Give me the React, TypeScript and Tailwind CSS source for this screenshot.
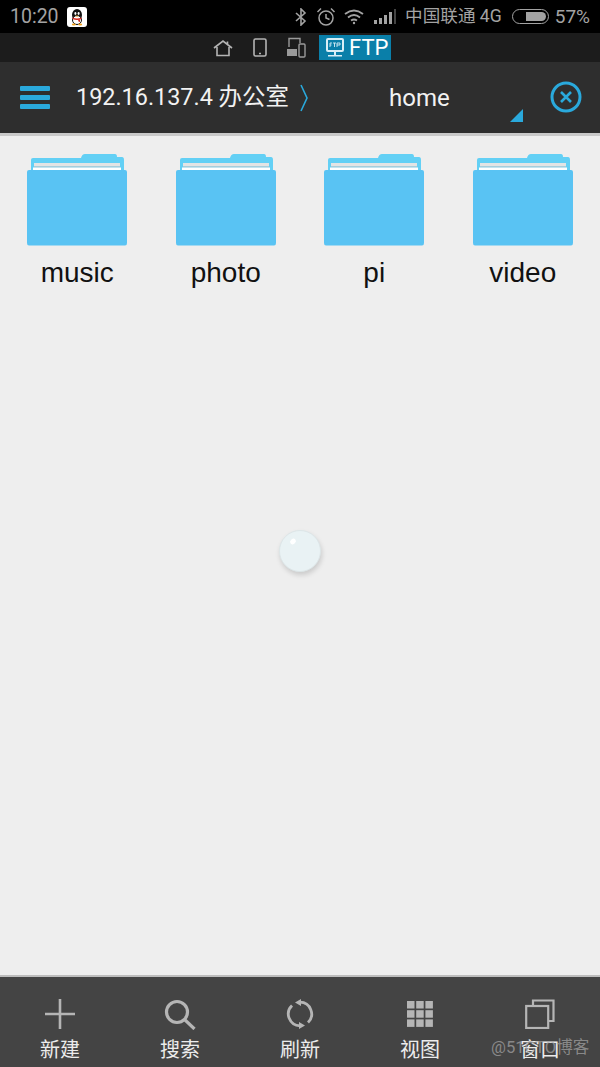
const cjk = { fontFamily: '"Roboto", "Noto Sans CJK SC", sans-serif' }

function QQIcon() {
  return (
    <svg width="20" height="20" viewBox="0 0 20 20" className="shrink-0">
      <rect width="20" height="20" rx="3" fill="#fff" />
      <ellipse cx="10" cy="8" rx="5" ry="6" fill="#111" />
      <ellipse cx="10" cy="13" rx="4.5" ry="4.5" fill="#fff" stroke="#111" strokeWidth="1" />
      <path d="M5.5 10.5 Q10 12.5 14.5 10.5 L14.5 12 Q10 14 5.5 12 Z" fill="#d9281e" />
      <path d="M11 12.5 L13 12.5 L13 15 L11.5 14.5 Z" fill="#d9281e" />
      <ellipse cx="8.4" cy="6.5" rx="1" ry="1.4" fill="#fff" />
      <ellipse cx="11.6" cy="6.5" rx="1" ry="1.4" fill="#fff" />
      <path d="M8.2 9 Q10 7.8 11.8 9 Q10 10 8.2 9 Z" fill="#f2a21b" />
      <ellipse cx="6.8" cy="17.5" rx="2" ry="1" fill="#f2a21b" />
      <ellipse cx="13.2" cy="17.5" rx="2" ry="1" fill="#f2a21b" />
    </svg>
  )
}

function StatusBar() {
  return (
    <div className="h-[33px] bg-black flex items-center pl-[10px] pr-[10px] text-[#a3a3a3]" style={cjk}>
      <span className="text-[19.5px] leading-none w-[57px]">10:20</span>
      <QQIcon />
      <div className="ml-auto flex items-center">
        <svg width="12" height="18" viewBox="0 0 12 18" fill="none" stroke="#a3a3a3" strokeWidth="1.6">
          <path d="M1 5 L10 13 L6 17 L6 1 L10 5 L1 13" />
        </svg>
        <svg width="20" height="20" viewBox="0 0 20 20" fill="none" stroke="#a3a3a3" strokeWidth="1.5" className="ml-[9px]">
          <circle cx="10" cy="11" r="7" />
          <path d="M10 7 L10 11 L13.5 12.5 M1.5 5 L5 1.5 M18.5 5 L15 1.5" />
        </svg>
        <svg width="20" height="16" viewBox="0 0 20 16" fill="none" stroke="#a3a3a3" strokeWidth="1.8" className="ml-[8px]">
          <path d="M1 5 Q10 -2 19 5 M4 8.5 Q10 3.5 16 8.5 M7 11.5 Q10 9.5 13 11.5" />
          <circle cx="10" cy="14" r="1.2" fill="#a3a3a3" stroke="none" />
        </svg>
        <div className="ml-[10px] flex items-end gap-[2px] h-[15px]">
          <div className="w-[3px] h-[4px] bg-[#a3a3a3]" />
          <div className="w-[3px] h-[6px] bg-[#a3a3a3]" />
          <div className="w-[3px] h-[9px] bg-[#a3a3a3]" />
          <div className="w-[3px] h-[12px] bg-[#a3a3a3]" />
          <div className="w-[2px] h-[15px] bg-[#444]" />
        </div>
        <span className="ml-[9px] text-[17.6px] leading-none whitespace-nowrap">中国联通 4G</span>
        <div className="ml-[10px] w-[37px] h-[15px] rounded-full border border-[#a3a3a3] flex justify-end p-[2px]">
          <div className="w-[20px] h-full rounded-r-full bg-[#a3a3a3]" />
        </div>
        <span className="ml-[6px] text-[19px] leading-none">57%</span>
      </div>
    </div>
  )
}

function TabBar() {
  return (
    <div className="h-[29px] bg-[#1c1c1c] flex items-center pl-[213px]">
      <svg width="20" height="18" viewBox="0 0 20 18" fill="none" stroke="#b4b4b4" strokeWidth="1.6">
        <path d="M1 9 L10 2 L19 9 M4 8 L4 16.5 L16 16.5 L16 8 M14.5 2.5 L14.5 5.5" />
      </svg>
      <svg width="14" height="19" viewBox="0 0 14 19" fill="none" stroke="#b4b4b4" strokeWidth="1.6" className="ml-[20px]">
        <rect x="1" y="1" width="12" height="17" rx="1.5" />
        <path d="M6 15.5 L8 15.5" />
      </svg>
      <svg width="20" height="21" viewBox="0 0 20 21" fill="none" stroke="#9a9a9a" strokeWidth="1.4" className="ml-[19px]">
        <path d="M3 10 L3 1.5 L14 1.5 L14 6" />
        <rect x="1" y="12" width="10" height="7" fill="#9a9a9a" stroke="none" />
        <rect x="13" y="7" width="6" height="13" rx="1" />
      </svg>
      <div className="ml-[13px] h-[25px] w-[72px] bg-[#0a7fa9] flex items-center pl-[6px] text-white">
        <svg width="20" height="21" viewBox="0 0 20 21" className="shrink-0">
          <rect x="1" y="1" width="18" height="14" rx="2" fill="#d8eef6" />
          <rect x="3" y="3" width="14" height="10" fill="#0a7fa9" />
          <rect x="9" y="15" width="2" height="3" fill="#d8eef6" />
          <rect x="3" y="18" width="14" height="1.5" fill="#d8eef6" />
          <path d="M5 10 L5 6 L7 6 M5 8 L6.5 8 M8 6 L11 6 M9.5 6 L9.5 10 M12 10 L12 6 L15 6 L15 8 L12 8" fill="none" stroke="#d8eef6" strokeWidth="0.9" />
        </svg>
        <span className="ml-[4px] text-[22px] leading-none" style={cjk}>FTP</span>
      </div>
    </div>
  )
}

function Header() {
  return (
    <div className="h-[71px] bg-[#2e2e2e] flex items-center pl-[20px] text-[#f2f2f2] relative" style={cjk}>
      <div className="w-[30px] flex flex-col gap-[4px]">
        <div className="h-[5px] rounded-[1px] bg-[#2aa9dc]" />
        <div className="h-[5px] rounded-[1px] bg-[#2aa9dc]" />
        <div className="h-[5px] rounded-[1px] bg-[#2aa9dc]" />
      </div>
      <span className="ml-[26px] text-[23.4px] leading-none whitespace-nowrap w-[222px]">192.16.137.4 办公室</span>
      <svg width="10" height="28" viewBox="0 0 10 28" fill="none" stroke="#2aa9dc" strokeWidth="1.6" className="shrink-0 ml-[1px]">
        <path d="M2 1 L8 14 L2 27" />
      </svg>
      <span className="ml-[80px] text-[24px] leading-none">home</span>
      <svg width="32" height="32" viewBox="0 0 32 32" fill="none" stroke="#2aa9dc" className="absolute left-[550px] top-[19px]">
        <circle cx="16" cy="16" r="14" strokeWidth="3" />
        <path d="M11 11 L21 21 M21 11 L11 21" strokeWidth="2.6" />
      </svg>
      <div className="absolute left-[510px] top-[47px] w-[13px] h-[13px] bg-[#2aa9dc] [clip-path:polygon(100%_0,100%_100%,0_100%)]" />
    </div>
  )
}

function Folder({ name }: { name: string }) {
  return (
    <div className="flex flex-col items-center">
      <svg width="100" height="92" viewBox="0 0 100 92">
        <path d="M4 6 Q4 4 6 4 H54 Q55 0 58 0 H88 Q90 0 90 3 H95 Q97 3 97 6 V20 H4 Z" fill="#63d0f5" />
        <rect x="7" y="9" width="86" height="3.5" fill="#e4e4e4" />
        <rect x="7" y="12.5" width="86" height="1" fill="#a9bfc9" />
        <rect x="6" y="13.5" width="88" height="3" fill="#ffffff" />
        <path d="M0 18 Q0 16 2 16 H98 Q100 16 100 18 V89 Q100 91.5 98 91.5 H2 Q0 91.5 0 89 Z" fill="#59c3f3" />
      </svg>
      <span className="mt-[9px] text-[28px] leading-[36px] text-[#111]" style={{ fontFamily: '"Liberation Sans", sans-serif' }}>{name}</span>
    </div>
  )
}

function Spinner() {
  return (
    <div className="relative w-[42px] h-[42px] rounded-full bg-[#e9f2f4] border border-[#dde6e8] shadow-[1px_3px_5px_rgba(0,0,0,0.15)]">
      <div className="absolute left-[10px] top-[8px] w-[6px] h-[5px] rounded-full bg-white rotate-[-40deg]" />
    </div>
  )
}

function NavItem({ label, children }: { label: string; children: React.ReactNode }) {
  return (
    <div className="flex flex-col items-center">
      <div className="h-[34px] flex items-center justify-center">{children}</div>
      <span className="mt-[7px] text-[20px] leading-[24px] text-[#ececec]" style={cjk}>{label}</span>
    </div>
  )
}

function BottomBar() {
  return (
    <div className="h-[90px] bg-[#444444] grid grid-cols-5 pt-[20px] relative">
      <NavItem label="新建">
        <svg width="30" height="30" viewBox="0 0 30 30" stroke="#b5b5b5" strokeWidth="2.6">
          <path d="M0 15 H30 M15 0 V30" />
        </svg>
      </NavItem>
      <NavItem label="搜索">
        <svg width="32" height="31" viewBox="0 0 32 31" fill="none" stroke="#b5b5b5" strokeWidth="3.2">
          <circle cx="13" cy="13" r="10.5" />
          <path d="M20.5 20.5 L30.5 30" />
        </svg>
      </NavItem>
      <NavItem label="刷新">
        <svg width="28" height="30" viewBox="0 0 28 30" fill="none" stroke="#b5b5b5" strokeWidth="2.8">
          <path d="M6 6.5 A11.8 11.8 0 0 0 14 26.8" />
          <path d="M22 23.5 A11.8 11.8 0 0 0 14 3.2" />
          <path d="M15 0 L15 7 L9 3.5 Z M13 30 L13 23 L19 26.5 Z" fill="#b5b5b5" stroke="none" />
        </svg>
      </NavItem>
      <NavItem label="视图">
        <svg width="26" height="26" viewBox="0 0 26 26" fill="#b5b5b5">
          <rect x="0" y="0" width="7.5" height="7.5" />
          <rect x="9.2" y="0" width="7.5" height="7.5" />
          <rect x="18.4" y="0" width="7.5" height="7.5" />
          <rect x="0" y="9.2" width="7.5" height="7.5" />
          <rect x="9.2" y="9.2" width="7.5" height="7.5" />
          <rect x="18.4" y="9.2" width="7.5" height="7.5" />
          <rect x="0" y="18.4" width="7.5" height="7.5" />
          <rect x="9.2" y="18.4" width="7.5" height="7.5" />
          <rect x="18.4" y="18.4" width="7.5" height="7.5" />
        </svg>
      </NavItem>
      <NavItem label="窗口">
        <svg width="30" height="30" viewBox="0 0 30 30" fill="none" stroke="#b5b5b5" strokeWidth="2.2">
          <path d="M8 7 V1.5 H28.5 V22 H23" />
          <rect x="1.2" y="7" width="22" height="22" />
        </svg>
      </NavItem>
      <span className="absolute left-[491px] top-[61px] text-[16.6px] leading-[20px] text-[#a8a8a8]/70 whitespace-nowrap" style={cjk}>@51CTO博客</span>
    </div>
  )
}

export default function App() {
  return (
    <div className="w-[600px] h-[1067px] flex flex-col overflow-hidden bg-[#eeeeee]">
      <StatusBar />
      <TabBar />
      <Header />
      <div className="h-[3px] bg-[#c9c9c9]" />
      <div className="flex-1 flex flex-col">
        <div className="grid grid-cols-4 px-[3px] pt-[18px]">
          <Folder name="music" />
          <Folder name="photo" />
          <Folder name="pi" />
          <Folder name="video" />
        </div>
        <div className="flex-1 flex justify-center pt-[239px]">
          <Spinner />
        </div>
      </div>
      <div className="h-[2px] bg-[#bdbdbd]" />
      <BottomBar />
    </div>
  )
}
